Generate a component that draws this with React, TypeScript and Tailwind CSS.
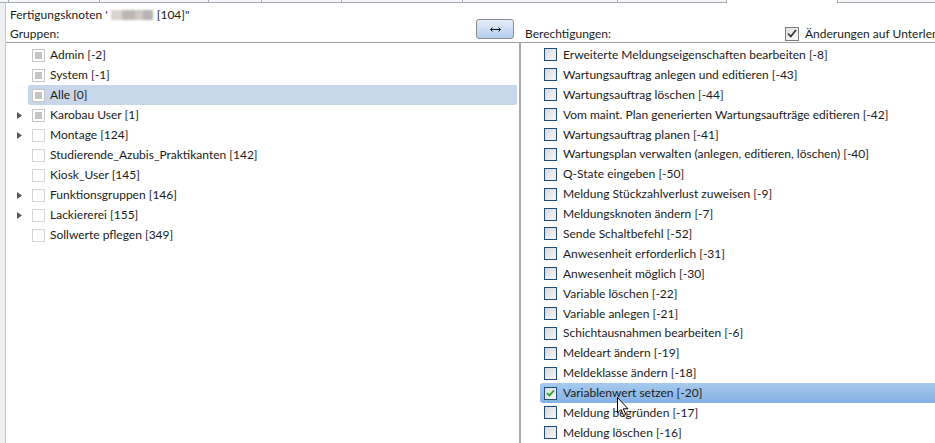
import React from 'react';

const groups = [
  { name: 'Admin [-2]', filled: true, expand: false },
  { name: 'System [-1]', filled: true, expand: false },
  { name: 'Alle [0]', filled: true, expand: false, selected: true },
  { name: 'Karobau User [1]', filled: true, expand: true },
  { name: 'Montage [124]', filled: false, expand: true },
  { name: 'Studierende_Azubis_Praktikanten [142]', filled: false, expand: false },
  { name: 'Kiosk_User [145]', filled: false, expand: false },
  { name: 'Funktionsgruppen [146]', filled: false, expand: true },
  { name: 'Lackiererei [155]', filled: false, expand: true },
  { name: 'Sollwerte pflegen [349]', filled: false, expand: false },
];

const rights = [
  'Erweiterte Meldungseigenschaften bearbeiten [-8]',
  'Wartungsauftrag anlegen und editieren [-43]',
  'Wartungsauftrag löschen [-44]',
  'Vom maint. Plan generierten Wartungsaufträge editieren [-42]',
  'Wartungsauftrag planen [-41]',
  'Wartungsplan verwalten (anlegen, editieren, löschen) [-40]',
  'Q-State eingeben [-50]',
  'Meldung Stückzahlverlust zuweisen [-9]',
  'Meldungsknoten ändern [-7]',
  'Sende Schaltbefehl [-52]',
  'Anwesenheit erforderlich [-31]',
  'Anwesenheit möglich [-30]',
  'Variable löschen [-22]',
  'Variable anlegen [-21]',
  'Schichtausnahmen bearbeiten [-6]',
  'Meldeart ändern [-19]',
  'Meldeklasse ändern [-18]',
  'Variablenwert setzen [-20]',
  'Meldung begründen [-17]',
  'Meldung löschen [-16]',
];

// column ticks of the grid header peeking in at the top
const ticks = [9, 91, 109, 53, 80, 121, 155, 109];

const Expander = () => (
  <svg width="5" height="7" viewBox="0 0 5 7" className="block">
    <path d="M0 0 L5 3.5 L0 7 Z" fill="#595959" />
  </svg>
);

const GroupBox = ({ filled }: { filled: boolean }) => (
  <div className={`w-[13px] h-[13px] border flex items-center justify-center bg-white ${filled ? 'border-[#c6c6c6]' : 'border-[#d6d6d6]'}`}>
    {filled && <div className="w-[7px] h-[7px] bg-[#c4c4c4]" />}
  </div>
);

const RightBox = ({ checked }: { checked: boolean }) => (
  <div className="w-[13px] h-[13px] border border-[#1f4c7c] bg-gradient-to-br from-[#d9d9d9] to-[#f7f7f7] flex items-center justify-center">
    {checked && (
      <svg width="9" height="8" viewBox="0 0 9 8">
        <path d="M1 4.2 L3.4 6.5 L8 1.3" stroke="#22a530" strokeWidth="1.8" fill="none" />
      </svg>
    )}
  </div>
);

export default function App() {
  return (
    <div
      className="relative w-[935px] h-[443px] overflow-hidden bg-white text-[12px] text-[#1b1b1b] leading-[20px]"
      style={{ fontFamily: '"Segoe UI", Lato, "Open Sans", sans-serif' }}
    >
      {/* grid header remnant */}
      <div className="flex h-[3px]">
        {ticks.map((w, i) => (
          <div key={i} style={{ width: w }} className="border-b border-r border-[#a9adb5] bg-[#f4f5f7]" />
        ))}
        <div className="w-[110px]" />
        <div className="flex-1 border-b border-l border-[#a9adb5] bg-[#f4f5f7]" />
      </div>

      <div className="flex h-[440px]">
        <div className="w-[6px] bg-[#eeeff2] border-r border-[#c4c8d0]" />

        <div className="flex-1 flex flex-col">
          {/* header */}
          <div className="pt-[2px] h-[40px] border-b border-[#a0a0a0] flex flex-col">
            <div className="pl-[4px] h-[20px] flex items-center">
              <span>Fertigungsknoten '</span>
              <span className="flex items-center mx-[3px] blur-[1px]">
                <span className="w-[11px] h-[10px] bg-[#d8d4d2]" />
                <span className="w-[13px] h-[10px] bg-[#bdb6b2]" />
                <span className="w-[8px] h-[10px] bg-[#cfc9c6]" />
                <span className="w-[10px] h-[10px] bg-[#b8b2b0]" />
              </span>
              <span className="ml-[1px]">[104]"</span>
            </div>
            <div className="flex items-end h-[17px]">
              <div className="w-[514px] flex items-end">
                <span className="pl-[4px] leading-[17px]">Gruppen:</span>
                <button className="ml-auto mr-[6px] mb-[3px] -mt-[6px] w-[38px] h-[20px] rounded-[3px] border border-[#8a8a8a] bg-gradient-to-b from-[#e6eefa] to-[#b4cef0] flex items-center justify-center">
                  <svg width="11" height="5" viewBox="0 0 11 5">
                    <path d="M0.5 2.5 H10.5 M2.5 0.5 L0.5 2.5 L2.5 4.5 M8.5 0.5 L10.5 2.5 L8.5 4.5" stroke="#111" strokeWidth="1" fill="none" />
                  </svg>
                </button>
              </div>
              <span className="pl-[5px] leading-[17px]">Berechtigungen:</span>
              <div className="ml-auto flex items-center w-[150px] gap-[6px] whitespace-nowrap leading-[17px] overflow-hidden">
                <div className="shrink-0 w-[14px] h-[14px] border border-[#7a7a7a] bg-gradient-to-br from-[#e2e2e2] to-[#fbfbfb] flex items-center justify-center">
                  <svg width="10" height="9" viewBox="0 0 10 9">
                    <path d="M1 4.5 L3.8 7.5 L9 1" stroke="#333" strokeWidth="1.7" fill="none" />
                  </svg>
                </div>
                <span>Änderungen auf Unterlen</span>
              </div>
            </div>
          </div>

          {/* body */}
          <div className="flex flex-1 overflow-hidden">
            {/* groups tree */}
            <div className="w-[513px] pt-[2px] pr-[2px]">
              {groups.map(g => (
                <div
                  key={g.name}
                  className={`flex items-center h-[20px] ml-[22px] pl-[4px] rounded-[2px] ${g.selected ? 'bg-[#c7d7e9]' : ''}`}
                >
                  <div className="w-0 relative -left-[15px]">{g.expand && <Expander />}</div>
                  <GroupBox filled={g.filled} />
                  <span className="ml-[5px] whitespace-nowrap">{g.name}</span>
                </div>
              ))}
            </div>

            <div className="w-[2px] bg-[#a9a9a9]" />

            {/* rights list */}
            <div className="flex-1 pt-[2px] pl-[23px] overflow-hidden">
              {rights.map((r, i) => {
                const sel = i === 17;
                return (
                  <div
                    key={r}
                    className={`flex items-center h-[19.9px] -ml-[4px] pl-[4px] rounded-l-[3px] whitespace-nowrap ${sel ? 'bg-gradient-to-b from-[#a7c9ee] to-[#84b1e3]' : ''}`}
                  >
                    <RightBox checked={sel} />
                    <span className="ml-[6px]">{r}</span>
                  </div>
                );
              })}
            </div>
          </div>
        </div>
      </div>

      {/* mouse cursor */}
      <svg className="absolute left-[617px] top-[397px]" width="13" height="20" viewBox="0 0 13 20">
        <path d="M0.5 0.5 L0.5 16 L4 12.5 L6.5 18.5 L8.8 17.5 L6.3 11.8 L11 11.8 Z" fill="#fff" stroke="#000" strokeWidth="1" />
      </svg>
    </div>
  );
}
